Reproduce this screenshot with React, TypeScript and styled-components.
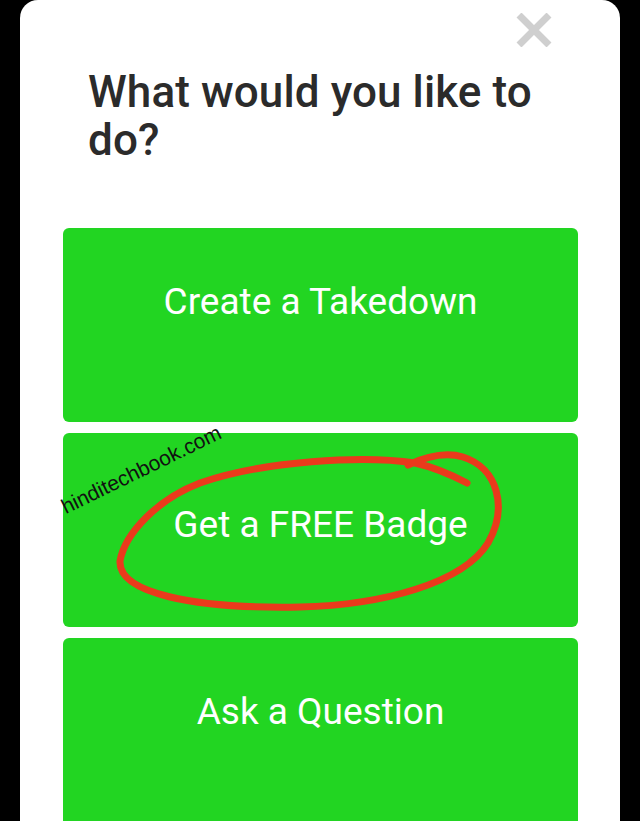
import React from "react";
import styled, { createGlobalStyle } from "styled-components";

const GlobalStyle = createGlobalStyle`
  html, body {
    margin: 0;
    padding: 0;
    background: #000;
    overflow: hidden;
  }
  body {
    font-family: Roboto, "Noto Sans", Arial, sans-serif;
  }
`;

const Card = styled.div`
  margin: 0 20px;
  min-height: 821px;
  background: #fff;
  border-radius: 18px 18px 0 0;
  position: relative;
  box-sizing: border-box;
  padding: 0 42px 0 43px;
  display: flex;
  flex-direction: column;
`;

const CloseButton = styled.button`
  position: absolute;
  top: 13px;
  right: 68px;
  width: 36px;
  height: 34px;
  padding: 0;
  border: none;
  background: transparent;
  display: flex;
  align-items: center;
  justify-content: center;
`;

const Title = styled.h1`
  margin: 68px 0 0 25px;
  font-family: Roboto, sans-serif;
  font-weight: 500;
  font-size: 44px;
  line-height: 48px;
  color: #2b2b2b;
  letter-spacing: 0.1px;
`;

const Options = styled.div`
  margin-top: 64px;
  display: flex;
  flex-direction: column;
  gap: 11px;
`;

const Option = styled.div<{ $top: number }>`
  position: relative;
  height: 194px;
  background: #22d522;
  border-radius: 6px;
  box-sizing: border-box;
  padding-top: ${(p) => p.$top}px;
  text-align: center;
  color: #fff;
  font-family: Roboto, sans-serif;
  font-size: 37px;
  font-weight: 400;
  line-height: 40px;
`;

const Watermark = styled.span`
  position: absolute;
  left: 4px;
  top: 64px;
  font-family: "Liberation Sans", Arial, sans-serif;
  font-size: 21px;
  line-height: 20px;
  color: #111;
  transform: rotate(-26deg);
  transform-origin: left bottom;
  white-space: nowrap;
`;

const Scribble = styled.svg`
  position: absolute;
  left: 0;
  top: 0;
  pointer-events: none;
`;

export default function App() {
  return (
    <>
      <GlobalStyle />
      <Card>
        <CloseButton aria-label="Close">
          <svg width="36" height="34" viewBox="0 0 36 34">
            <path d="M3 2 L33 32 M33 2 L3 32" stroke="#cfcfcf" strokeWidth="7" />
          </svg>
        </CloseButton>
        <Title>
          What would you like to
          <br />
          do?
        </Title>
        <Options>
          <Option $top={54}>Create a Takedown</Option>
          <Option $top={72}>
            Get a FREE Badge
            <Watermark>hinditechbook.com</Watermark>
            <Scribble width="515" height="194" viewBox="0 0 515 194">
              <path
                d="M404,50 C385,40 370,34 352,30 C300,22 200,28 137,50 C95,66 62,100 57,128 C55,160 130,176 237,174 C320,172 400,150 425,110 C445,75 435,35 400,24 C380,18 360,25 345,32"
                fill="none"
                stroke="#ea3a1c"
                strokeWidth="7"
                strokeLinecap="round"
              />
            </Scribble>
          </Option>
          <Option $top={54}>Ask a Question</Option>
        </Options>
      </Card>
    </>
  );
}
